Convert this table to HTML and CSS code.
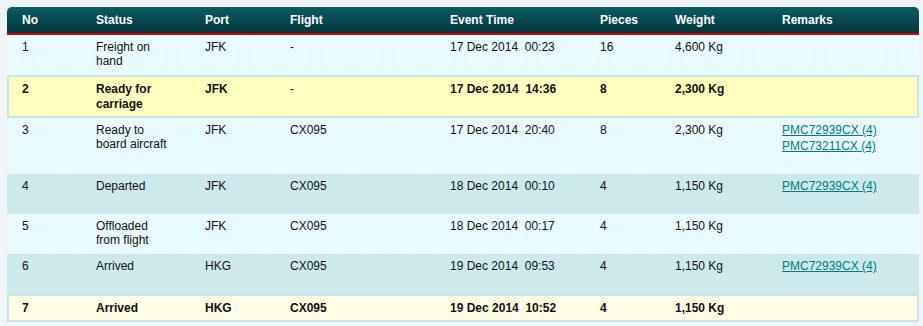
FILE: index.html
```html
<!DOCTYPE html>
<html>
<head>
<meta charset="utf-8">
<link rel="stylesheet" href="styles.css">
</head>
<body>
<div class="table">
  <div class="row head">
    <div class="cell">No</div>
    <div class="cell">Status</div>
    <div class="cell">Port</div>
    <div class="cell">Flight</div>
    <div class="cell">Event Time</div>
    <div class="cell">Pieces</div>
    <div class="cell">Weight</div>
    <div class="cell">Remarks</div>
  </div>
  <div class="row light">
    <div class="cell">1</div>
    <div class="cell">Freight on<br>hand</div>
    <div class="cell">JFK</div>
    <div class="cell">-</div>
    <div class="cell time">17 Dec 2014  00:23</div>
    <div class="cell">16</div>
    <div class="cell">4,600 Kg</div>
    <div class="cell"></div>
  </div>
  <div class="row current">
    <div class="cell">2</div>
    <div class="cell">Ready for<br>carriage</div>
    <div class="cell">JFK</div>
    <div class="cell plain">-</div>
    <div class="cell time">17 Dec 2014  14:36</div>
    <div class="cell">8</div>
    <div class="cell">2,300 Kg</div>
    <div class="cell"></div>
  </div>
  <div class="row light">
    <div class="cell">3</div>
    <div class="cell">Ready to<br>board aircraft</div>
    <div class="cell">JFK</div>
    <div class="cell">CX095</div>
    <div class="cell time">17 Dec 2014  20:40</div>
    <div class="cell">8</div>
    <div class="cell">2,300 Kg</div>
    <div class="cell remarks"><a href="#">PMC72939CX (4)</a><a href="#">PMC73211CX (4)</a></div>
  </div>
  <div class="row dark">
    <div class="cell">4</div>
    <div class="cell">Departed</div>
    <div class="cell">JFK</div>
    <div class="cell">CX095</div>
    <div class="cell time">18 Dec 2014  00:10</div>
    <div class="cell">4</div>
    <div class="cell">1,150 Kg</div>
    <div class="cell remarks"><a href="#">PMC72939CX (4)</a></div>
  </div>
  <div class="row light">
    <div class="cell">5</div>
    <div class="cell">Offloaded<br>from flight</div>
    <div class="cell">JFK</div>
    <div class="cell">CX095</div>
    <div class="cell time">18 Dec 2014  00:17</div>
    <div class="cell">4</div>
    <div class="cell">1,150 Kg</div>
    <div class="cell"></div>
  </div>
  <div class="row dark">
    <div class="cell">6</div>
    <div class="cell">Arrived</div>
    <div class="cell">HKG</div>
    <div class="cell">CX095</div>
    <div class="cell time">19 Dec 2014  09:53</div>
    <div class="cell">4</div>
    <div class="cell">1,150 Kg</div>
    <div class="cell remarks"><a href="#">PMC72939CX (4)</a></div>
  </div>
  <div class="row latest">
    <div class="cell">7</div>
    <div class="cell">Arrived</div>
    <div class="cell">HKG</div>
    <div class="cell">CX095</div>
    <div class="cell time">19 Dec 2014  10:52</div>
    <div class="cell">4</div>
    <div class="cell">1,150 Kg</div>
    <div class="cell"></div>
  </div>
</div>
</body>
</html>
```
FILE: styles.css
```css
html, body {
  margin: 0;
  background: #f0f4f6;
}
body {
  padding: 7px 4px 0 7px;
  font-family: "Liberation Sans", Arial, sans-serif;
  font-size: 12px;
  color: #111;
}
.table {
  width: 912px;
  display: flex;
  flex-direction: column;
}
.row {
  display: grid;
  grid-template-columns: 74px 109px 85px 160px 150px 75px 107px 152px;
  line-height: 14px;
}
.cell {
  padding: 5px 0 7px 15px;
}
.time {
  white-space: pre;
}
.head {
  background: linear-gradient(#0b5d64, #01363a);
  border-radius: 5px 5px 0 0;
  border-bottom: 2px solid #d40000;
  color: #fff;
  font-weight: bold;
  height: 26px;
  align-items: center;
}
.head .cell {
  padding: 0 0 0 15px;
}
.light {
  background-color: #e9fbfe;
  background-image: radial-gradient(circle, #dcf0f3 0.6px, transparent 1px);
  background-size: 9px 9px;
  background-position: 3px 3px;
}
.dark {
  background: #cde9ec;
}
.current, .latest {
  font-weight: bold;
  line-height: 15px;
  border: 2px solid #c6e5e9;
}
.current {
  background: #ffffbe;
}
.latest {
  background: #fffde6;
}
.current .cell, .latest .cell {
  padding: 5px 0 4px 13px;
}
.plain {
  font-weight: normal;
}
.remarks {
  display: flex;
  flex-direction: column;
  padding-bottom: 21px;
}
.remarks a {
  color: #007c82;
  text-decoration: underline;
}
.remarks a + a {
  margin-top: 2px;
}
```
